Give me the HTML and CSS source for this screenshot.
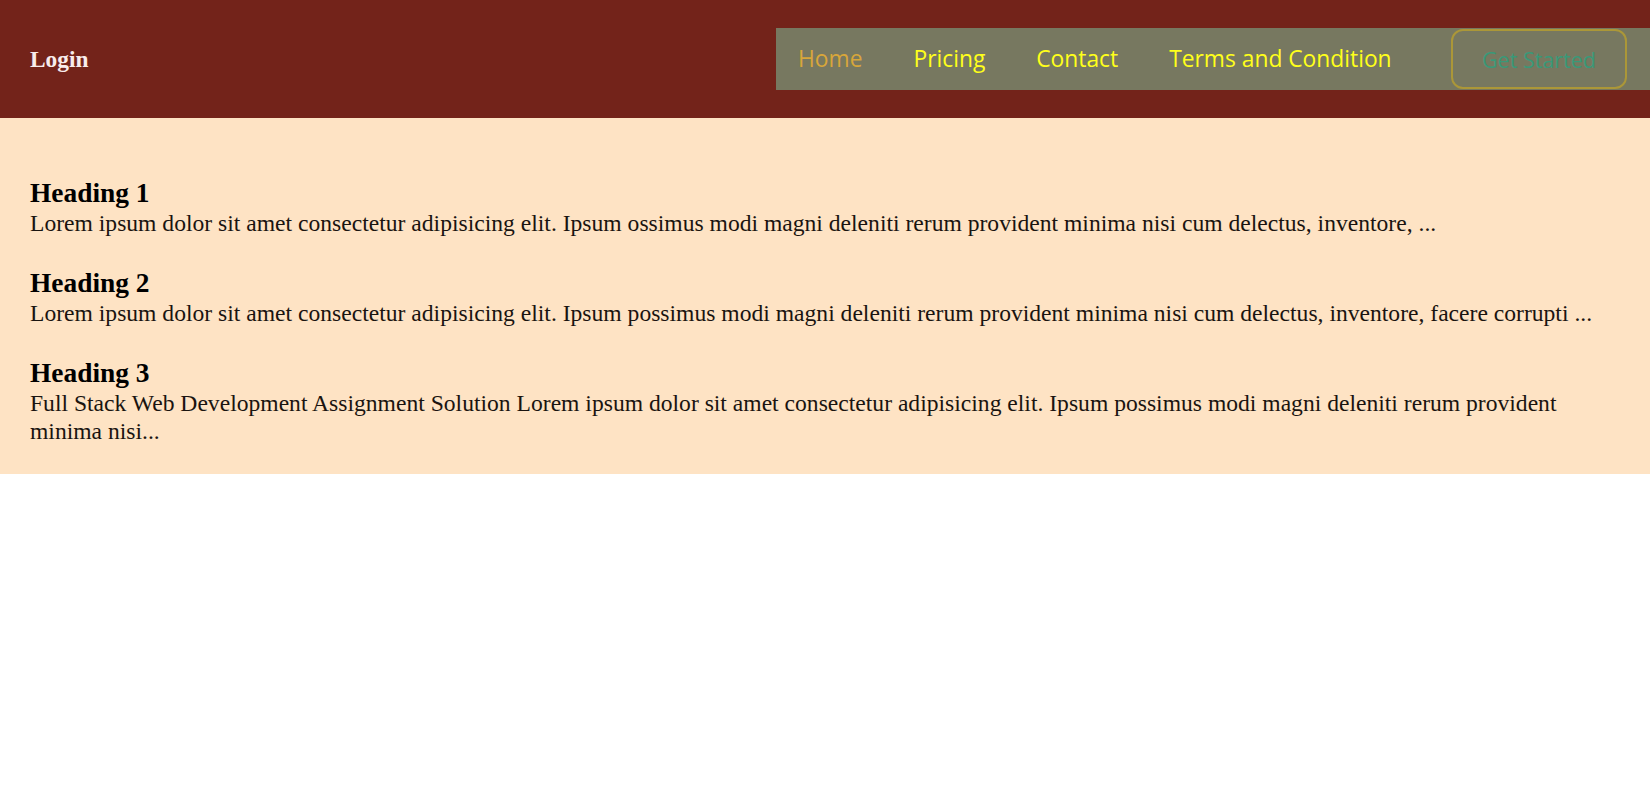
FILE: index.html
```html
<!DOCTYPE html>
<html lang="en">
<head>
<meta charset="utf-8">
<title>Login</title>
<link rel="stylesheet" href="styles.css">
</head>
<body>
<header class="topbar">
  <div class="brand">Login</div>
  <nav class="nav">
    <ul class="nav-links">
      <li><a class="nav-link active" href="#">Home</a></li>
      <li><a class="nav-link" href="#">Pricing</a></li>
      <li><a class="nav-link" href="#">Contact</a></li>
      <li><a class="nav-link" href="#">Terms and Condition</a></li>
    </ul>
    <button class="cta">Get Started</button>
  </nav>
</header>
<main class="content">
  <section class="item">
    <h3 class="item-title">Heading 1</h3>
    <p class="item-text">Lorem ipsum dolor sit amet consectetur adipisicing elit. Ipsum ossimus modi magni deleniti rerum provident minima nisi cum delectus, inventore, ...</p>
  </section>
  <section class="item">
    <h3 class="item-title">Heading 2</h3>
    <p class="item-text">Lorem ipsum dolor sit amet consectetur adipisicing elit. Ipsum possimus modi magni deleniti rerum provident minima nisi cum delectus, inventore, facere corrupti ...</p>
  </section>
  <section class="item">
    <h3 class="item-title">Heading 3</h3>
    <p class="item-text">Full Stack Web Development Assignment Solution Lorem ipsum dolor sit amet consectetur adipisicing elit. Ipsum possimus modi magni deleniti rerum provident minima nisi...</p>
  </section>
</main>
</body>
</html>
```

FILE: styles.css
```css
* { box-sizing: border-box; }

html, body {
  margin: 0;
  padding: 0;
  background: #ffffff;
}

body {
  font-family: "Liberation Serif", "Times New Roman", serif;
  color: #111;
}

.topbar {
  height: 118px;
  background: #73231a;
  display: flex;
  align-items: center;
  justify-content: space-between;
  padding-left: 30px;
}

.brand {
  font-family: "Liberation Serif", "Times New Roman", serif;
  font-weight: bold;
  font-size: 23.4px;
  color: #f8ecec;
  line-height: 1;
  padding-top: 2px;
}

.nav {
  height: 62px;
  width: 874px;
  background: #777860;
  display: flex;
  align-items: center;
  justify-content: space-between;
  padding-left: 22px;
  padding-right: 23px;
}

.nav-links {
  list-style: none;
  margin: 0;
  padding: 0;
  display: flex;
  gap: 51px;
}

.nav-link {
  font-family: "Comic Sans MS", "Open Sans", sans-serif;
  font-size: 22.8px;
  font-weight: 500;
  color: #ffff1a;
  text-decoration: none;
  line-height: 1;
}

.nav-link.active {
  color: #d8a63a;
}

.cta {
  width: 176px;
  height: 60px;
  background: transparent;
  border: 2px solid #ab9738;
  border-radius: 12px;
  color: #3a9878;
  font-family: "Comic Sans MS", "Open Sans", sans-serif;
  font-size: 21.5px;
  padding: 0;
}

.content {
  background: #fee3c4;
  padding: 58.7px 30px 28px;
  display: flex;
  flex-direction: column;
  gap: 29.45px;
}

.item-title {
  margin: 0;
  font-size: 27.4px;
  line-height: 32.15px;
  font-weight: bold;
  color: #000;
}

.item-text {
  margin: 0;
  font-size: 23.6px;
  line-height: 28.4px;
  color: #1a1410;
}
```
